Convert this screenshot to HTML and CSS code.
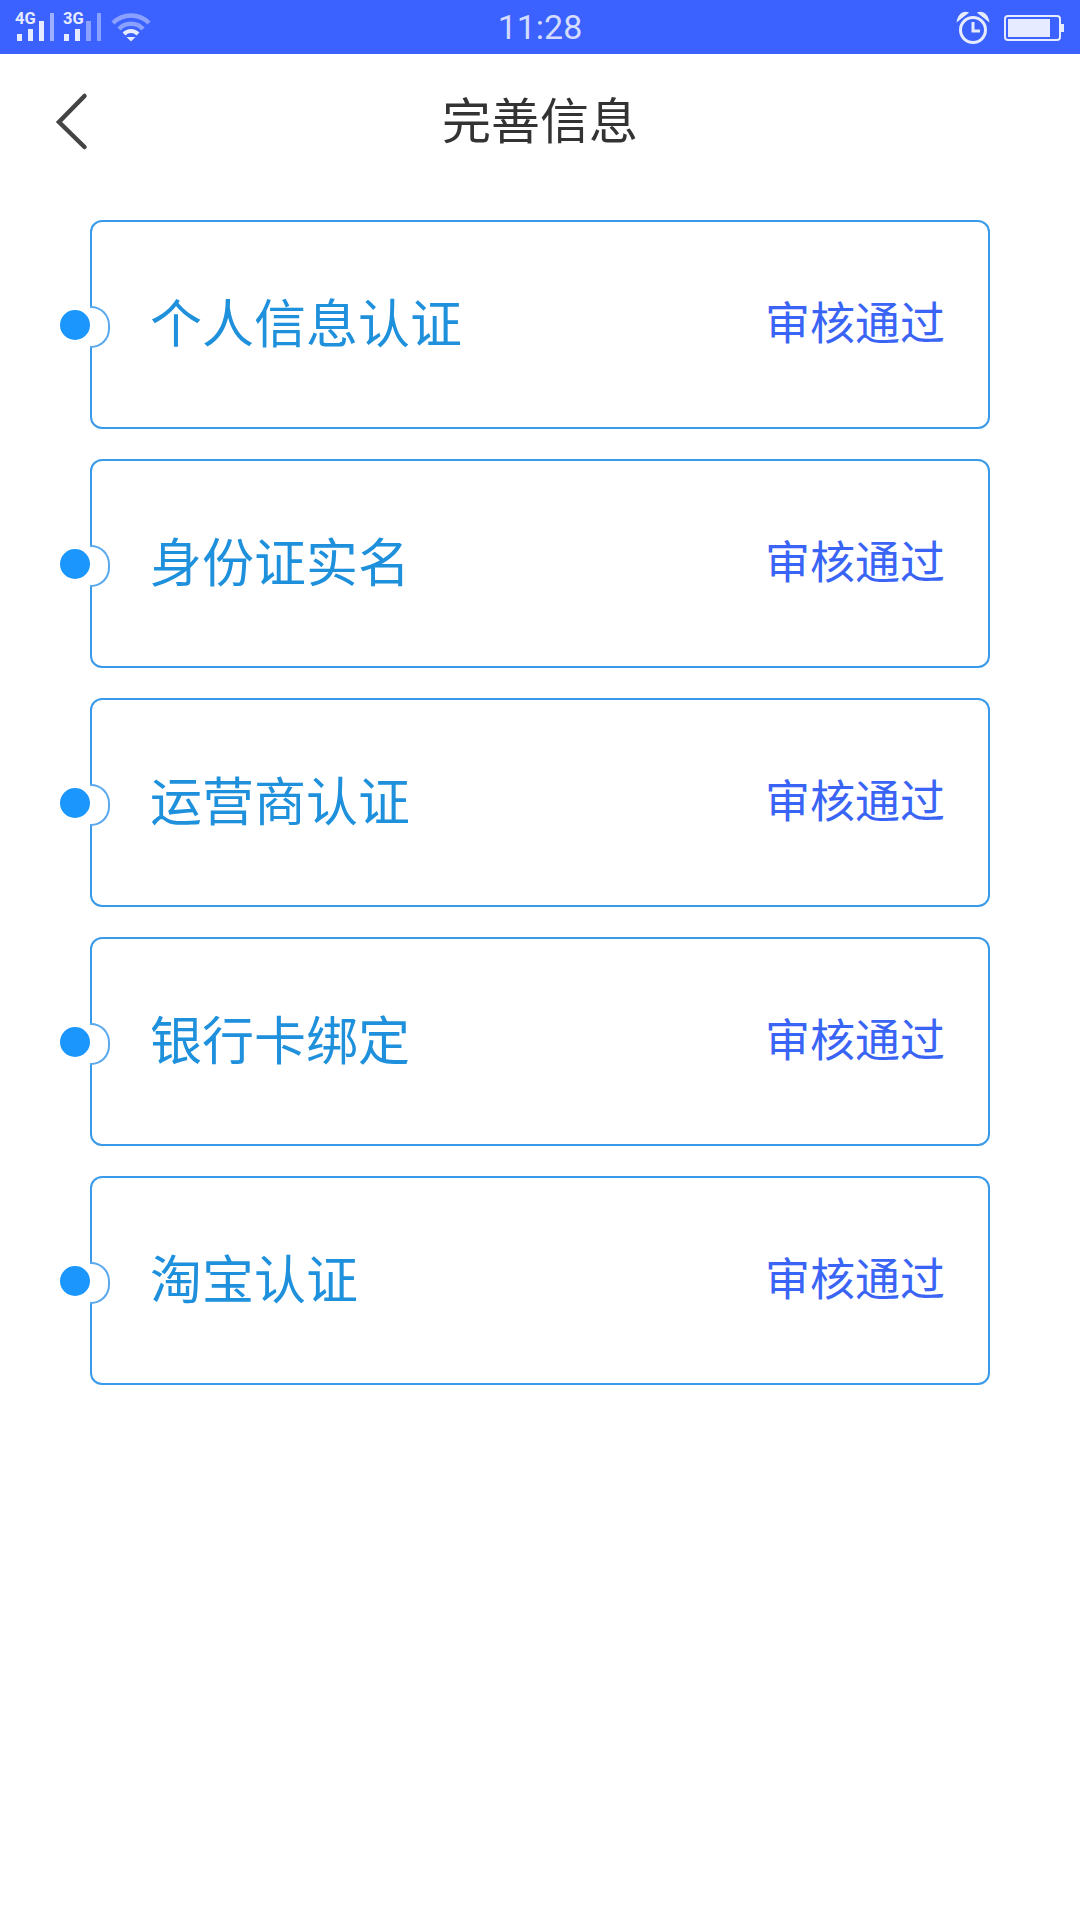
FILE: index.html
```html
<!DOCTYPE html>
<html lang="zh-CN">
<head>
<meta charset="utf-8">
<title>完善信息</title>
<link rel="stylesheet" href="styles.css">
</head>
<body>
<div class="app">
  <div class="statusbar">
    <div class="status-left">
      <svg class="status-signal" width="124" height="54" viewBox="0 0 124 54">
        <g fill="#e6ebff"><rect x="17" y="34" width="5" height="7"/><rect x="28" y="29" width="5" height="12"/><rect x="39" y="21" width="5" height="20"/></g>
        <rect x="50" y="13" width="4" height="28" fill="#9db0ff"/>
        <g fill="#e6ebff"><rect x="64" y="34" width="5" height="7"/><rect x="75" y="29" width="5" height="12"/></g>
        <g fill="#8ba1ff"><rect x="86" y="21" width="5" height="20"/><rect x="97" y="13" width="4" height="28"/></g>
      </svg>
      <span class="net net-4g">4G</span>
      <span class="net net-3g">3G</span>
      <svg class="status-wifi" width="40" height="30" viewBox="0 0 40 30">
        <path d="M2 11 C12 1 28 1 38 11" fill="none" stroke="#8ba1ff" stroke-width="4.5"/>
        <path d="M8 17 C14 10 26 10 32 17" fill="none" stroke="#8ba1ff" stroke-width="4.5"/>
        <path d="M13 22 C17 18 23 18 27 22" fill="none" stroke="#e6ebff" stroke-width="4"/>
        <path d="M15.5 25 L24.5 25 L20 29.5 Z" fill="#e6ebff"/>
      </svg>
    </div>
    <div class="status-time">11:28</div>
    <div class="status-right">
      <svg width="36" height="34" viewBox="0 0 36 34">
        <circle cx="18" cy="19" r="12.5" fill="none" stroke="#e6ebff" stroke-width="3"/>
        <path d="M18 11 V20 H25" fill="none" stroke="#e6ebff" stroke-width="3"/>
        <path d="M3 9 C4 4 8 1 12 2 Z M33 9 C32 4 28 1 24 2 Z" fill="#e6ebff" stroke="#e6ebff" stroke-width="2"/>
      </svg>
      <div class="battery"><div class="battery-fill"></div></div>
      <div class="battery-nub"></div>
    </div>
  </div>

  <header class="navbar">
    <svg class="back" width="36" height="60" viewBox="0 0 36 60">
      <path d="M30.5 5 L5 31 L30.5 56" fill="none" stroke="#444444" stroke-width="4.5" stroke-linecap="round"/>
    </svg>
    <h1 class="title">完善信息</h1>
  </header>

  <main class="list">
    <div class="card"><span class="dot"></span><span class="card-name">个人信息认证</span><span class="card-status">审核通过</span></div>
    <div class="card"><span class="dot"></span><span class="card-name">身份证实名</span><span class="card-status">审核通过</span></div>
    <div class="card"><span class="dot"></span><span class="card-name">运营商认证</span><span class="card-status">审核通过</span></div>
    <div class="card"><span class="dot"></span><span class="card-name">银行卡绑定</span><span class="card-status">审核通过</span></div>
    <div class="card"><span class="dot"></span><span class="card-name">淘宝认证</span><span class="card-status">审核通过</span></div>
  </main>
</div>
</body>
</html>
```

FILE: styles.css
```css
* { box-sizing: border-box; }
html, body { margin: 0; padding: 0; background: #fff; }
body { font-family: "Noto Sans CJK SC", "Noto Sans", sans-serif; }
.app { width: 1080px; height: 1920px; background: #fff; overflow: hidden; }

.statusbar {
  position: relative;
  height: 54px;
  background: #3b62fe;
  display: flex;
  justify-content: center;
  align-items: center;
}
.status-left { position: absolute; left: 0; top: 0; width: 160px; height: 54px; }
.status-signal { display: block; }
.net {
  position: absolute;
  top: 10px;
  font: bold 16.5px/18px Roboto, sans-serif;
  color: #e6ebff;
}
.net-4g { left: 15px; }
.net-3g { left: 63px; }
.status-wifi { position: absolute; left: 111px; top: 12px; }
.status-time {
  font: 34px/56px Roboto, sans-serif;
  color: #d3dbff;
}
.status-right {
  position: absolute;
  right: 16px;
  top: 0;
  height: 54px;
  display: flex;
  align-items: center;
}
.status-right svg { margin-right: 13px; margin-top: 1px; }
.battery {
  width: 57px;
  height: 26px;
  border: 2px solid #e6ebff;
  border-radius: 4px;
  padding: 2px;
  margin-top: 1px;
}
.battery-fill { width: 42px; height: 100%; background: #e6ebff; }
.battery-nub { width: 3px; height: 8px; background: #e6ebff; margin-top: 1px; }

.navbar {
  position: relative;
  height: 132px;
  display: flex;
  align-items: center;
  justify-content: center;
}
.back { position: absolute; left: 54px; top: 37px; }
.title {
  margin: 0 0 4px;
  font-size: 49px;
  font-weight: 400;
  color: #333;
  line-height: 124px;
}

.list {
  display: flex;
  flex-direction: column;
  gap: 30px;
  padding: 34px 90px 0;
}
.card {
  position: relative;
  height: 209px;
  border: 2px solid #3a9aea;
  border-radius: 12px;
  display: flex;
  align-items: center;
  justify-content: space-between;
  padding: 0 43px 8px 58px;
  background: #fff;
}
.card::before {
  content: "";
  position: absolute;
  left: -2px;
  top: 84px;
  width: 18px;
  height: 38px;
  background: #fff;
  border: 2px solid #5aa9ee;
  border-left: 0;
  border-radius: 0 19px 19px 0;
}
.dot {
  position: absolute;
  left: -32px;
  top: 88px;
  width: 30px;
  height: 30px;
  border-radius: 50%;
  background: #1a96fc;
}
.card-name { font-size: 52px; line-height: 72px; color: #1e90dc; }
.card-status { font-size: 45px; line-height: 60px; color: #3a64f5; }
```
